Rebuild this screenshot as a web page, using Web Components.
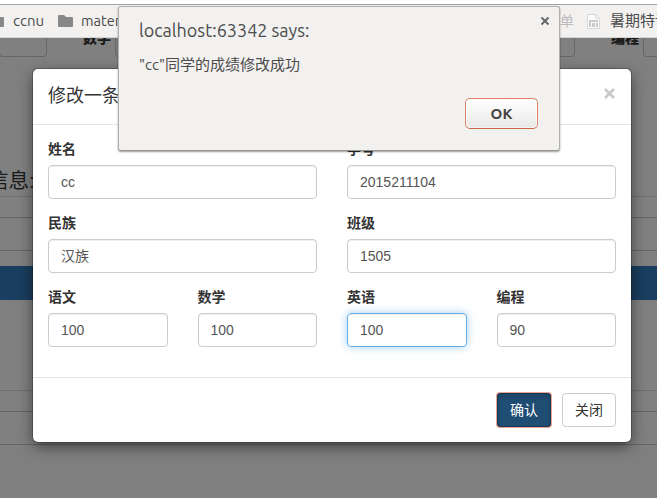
<!DOCTYPE html>
<html lang="zh-CN">
<head>
<meta charset="utf-8">
<title>成绩管理</title>
<style>
body{margin:0;background:#808080;width:657px;height:498px;overflow:hidden;position:relative;font:14px/20px "Liberation Sans","Noto Sans CJK SC",sans-serif;color:#333}
</style>
</head>
<body>
<bookmark-bar></bookmark-bar>
<score-page></score-page>
<edit-modal>
  <span slot="title">修改一条信息</span>
  <form-field label="姓名" value="cc" style="grid-column:span 2"></form-field>
  <form-field label="学号" value="2015211104" style="grid-column:span 2"></form-field>
  <form-field label="民族" value="汉族" style="grid-column:span 2"></form-field>
  <form-field label="班级" value="1505" style="grid-column:span 2"></form-field>
  <form-field label="语文" value="100"></form-field>
  <form-field label="数学" value="100"></form-field>
  <form-field label="英语" value="100" active></form-field>
  <form-field label="编程" value="90"></form-field>
  <modal-button slot="footer" primary>确认</modal-button>
  <modal-button slot="footer">关闭</modal-button>
</edit-modal>
<alert-dialog>
  <span slot="title">localhost:63342 says:</span>
  <span>"cc"同学的成绩修改成功</span>
</alert-dialog>
<script>
const define = (name, html, setup) => customElements.define(name, class extends HTMLElement {
  constructor() {
    super();
    this.attachShadow({mode: 'open'}).innerHTML = html;
  }
  connectedCallback() { if (setup) setup(this, this.shadowRoot); }
});

define('bookmark-bar', `<style>
:host{display:flex;box-sizing:border-box;height:38px;border-top:4px solid #fff;background:#f2f1f0;box-shadow:inset 0 1px #a3a2a1,inset 0 -1px #d6d5d4;align-items:center;overflow:hidden;white-space:nowrap;font:15px/20px Ubuntu,"Noto Sans","Noto Sans CJK SC",sans-serif;color:#4b4b4b}
svg,span{flex:none;display:block}
.first{margin-left:-11px}
.a{width:33px;margin-left:9px;font-size:15px}
.b{width:70px;margin-left:8px;font-size:14.5px}
.second{margin-left:12px}
.c{margin-left:409px;width:15px;color:#bbb;font-size:14px}
.doc{margin-left:12px}
.d{margin-left:10px}
</style>
<svg class="first" width="15" height="12" viewBox="0 0 15 12"><path fill="#888" d="M1 0h5l2 2h6q1 0 1 1v8q0 1-1 1H1q-1 0-1-1V1q0-1 1-1z"/></svg>
<span class="a">ccnu</span>
<svg class="second" width="15" height="12" viewBox="0 0 15 12"><path fill="#888" d="M1 0h5l2 2h6q1 0 1 1v8q0 1-1 1H1q-1 0-1-1V1q0-1 1-1z"/></svg>
<span class="b">materials</span>
<span class="c">单</span>
<svg class="doc" width="13" height="15" viewBox="0 0 13 15"><path fill="#fbfbfb" stroke="#d8d8d8" d="M.5.5h8l4 4v10H.5z"/><path fill="none" stroke="#dcdcdc" d="M8.500.5v4h4"/><path fill="#cacaca" d="M2 6h9v2H2zM2 8h2v5H2zM5 9h3v4H5zM9 9h2v4H9z"/></svg>
<span class="d">暑期特训</span>`);

define('score-page', `<style>
:host{display:flex;flex-direction:column;height:460px;overflow:hidden}
.filters{display:flex;height:19px;flex:none;color:#1a1a1a;font-weight:700}
.filters b{line-height:20px;margin-top:-10px;width:28px;height:20px;flex:none;white-space:nowrap}
.filters i{box-sizing:border-box;height:19px;border:1px solid #666;border-top:0;border-radius:0 0 4px 4px;flex:none}
h2{margin:110px 0 0 -12px;font:20.5px/28px "Liberation Sans","Noto Sans CJK SC",sans-serif;color:#1a1a1a;height:29px;flex:none}
.rows{flex:none;box-sizing:border-box;height:55px;border-top:1px solid #6f6f6f;border-bottom:1px solid #666}
.rows:before{content:"";display:block;height:20px;border-bottom:1px solid #666}
.band{height:34px;background:#1a3e5f;margin:15px 0 90px;flex:none}
</style>
<div class="filters"><i style="width:48px;margin-left:-1px"></i><b style="margin-left:36px">数学</b><i style="width:130px;margin-left:4px"></i><i style="width:200px;margin-left:130px"></i><b style="margin-left:36px">编程</b><i style="width:60px;margin-left:4px"></i></div>
<h2>信息:</h2><div class="rows"></div><div class="band"></div><div class="rows"></div>`);

define('edit-modal', `<style>
:host{display:block;position:absolute;left:33px;top:69px;width:598px;height:373px;background:#fff;border-radius:5px;box-shadow:0 0 0 1px rgba(0,0,0,.22),0 5px 15px rgba(0,0,0,.5)}
header{box-sizing:border-box;height:56px;padding:15px 15px 0;display:flex;justify-content:space-between;border-bottom:1px solid #e5e5e5;font-size:18px;line-height:25px}
header svg{margin:4px 1px 0 0}
main{display:grid;grid-template-columns:repeat(4,1fr);gap:15px 30px;padding:15px 15px 30px}
footer{display:flex;justify-content:flex-end;gap:10px;padding:15px;border-top:1px solid #e5e5e5}
</style>
<header><slot name="title"></slot><svg width="11" height="11" viewBox="0 0 11 11"><path d="M1 1l9 9M10 1L1 10" stroke="#c8c8c8" stroke-width="2.7"/></svg></header>
<main><slot></slot></main>
<footer><slot name="footer"></slot></footer>`);

define('form-field', `<style>
:host{display:flex;flex-direction:column;gap:5px;min-width:0}
label{font-weight:700;height:20px;line-height:18px}
div{box-sizing:border-box;height:34px;border:1px solid #ccc;border-radius:4px;padding:6px 12px;color:#555;box-shadow:inset 0 1px 1px rgba(0,0,0,.075)}
:host([active]) div{border-color:#66afe9;box-shadow:inset 0 1px 1px rgba(0,0,0,.075),0 0 8px rgba(102,175,233,.6)}
</style><label></label><div></div>`, (el, root) => {
  root.querySelector('label').textContent = el.getAttribute('label');
  root.querySelector('div').textContent = el.getAttribute('value');
});

define('modal-button', `<style>
:host{display:block;box-sizing:border-box;height:34px;width:54px;border:1px solid #ccc;border-radius:4px;line-height:20px;padding:6px 0;text-align:center;background:#fff;color:#333}
:host([primary]){background:#204d74;border-color:#163856;color:#fff;border-radius:3px;box-shadow:inset 0 3px 5px rgba(0,0,0,.125),0 0 0 1px #eda58d;margin-right:1px}
</style><slot></slot>`);

define('alert-dialog', `<style>
:host{display:flex;flex-direction:column;box-sizing:border-box;position:absolute;left:118px;top:6px;width:442px;height:145px;padding:12px 21px 21px 20px;background:#f2f1f0;border:1px solid #b1b0ae;border-bottom-color:#969591;border-radius:3px;box-shadow:0 1px 2px rgba(0,0,0,.4);font-family:Ubuntu,"Noto Sans","Noto Sans CJK SC",sans-serif;color:#4c4c4c}
header{display:flex;justify-content:space-between;font-size:18px;line-height:22px;height:24px;white-space:nowrap}
header svg{margin:-8px -12px 0 0}
p{margin:12px 0 0;font-size:15px;line-height:20px;height:20px}
.ok{box-sizing:border-box;margin:auto 0 0 auto;width:73px;height:31px;border:1px solid #dc8465;border-bottom-color:#cb6844;border-radius:5px;background:linear-gradient(#fff,#e9e9e8);box-shadow:inset 0 0 0 1px rgba(255,255,255,.5);font:700 15px/30px Ubuntu,"Open Sans",sans-serif;text-align:center;color:#444}
</style>
<header><slot name="title"></slot><svg width="10" height="20" viewBox="0 0 10 20"><path d="M1.500 6.500l7 7M8.500 6.500l-7 7" stroke="#686868" stroke-width="2"/></svg></header>
<p><slot></slot></p><div class="ok">OK</div>`);
</script>
</body>
</html>
